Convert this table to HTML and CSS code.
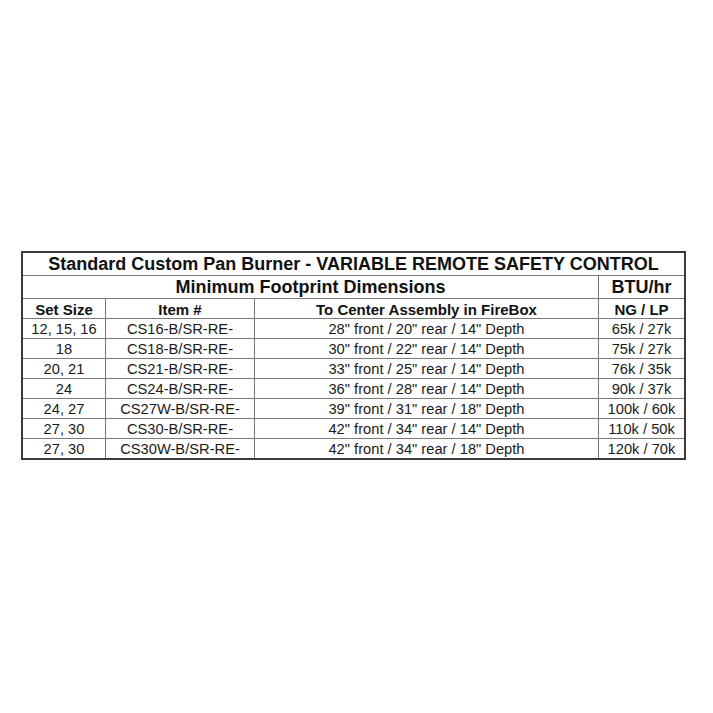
FILE: index.html
```html
<!DOCTYPE html>
<html>
<head>
<meta charset="utf-8">
<link rel="stylesheet" href="styles.css">
</head>
<body>
<div class="page">
  <div class="spec">
    <div class="cell title span4">Standard Custom Pan Burner - VARIABLE REMOTE SAFETY CONTROL</div>
    <div class="cell title span3">Minimum Footprint Dimensions</div>
    <div class="cell title last">BTU/hr</div>
    <div class="cell head">Set Size</div>
    <div class="cell head">Item #</div>
    <div class="cell head">To Center Assembly in FireBox</div>
    <div class="cell head last">NG / LP</div>

    <div class="cell">12, 15, 16</div>
    <div class="cell">CS16-B/SR-RE-</div>
    <div class="cell">28" front / 20" rear / 14" Depth</div>
    <div class="cell last">65k / 27k</div>

    <div class="cell">18</div>
    <div class="cell">CS18-B/SR-RE-</div>
    <div class="cell">30" front / 22" rear / 14" Depth</div>
    <div class="cell last">75k / 27k</div>

    <div class="cell">20, 21</div>
    <div class="cell">CS21-B/SR-RE-</div>
    <div class="cell">33" front / 25" rear / 14" Depth</div>
    <div class="cell last">76k / 35k</div>

    <div class="cell">24</div>
    <div class="cell">CS24-B/SR-RE-</div>
    <div class="cell">36" front / 28" rear / 14" Depth</div>
    <div class="cell last">90k / 37k</div>

    <div class="cell">24, 27</div>
    <div class="cell">CS27W-B/SR-RE-</div>
    <div class="cell">39" front / 31" rear / 18" Depth</div>
    <div class="cell last">100k / 60k</div>

    <div class="cell">27, 30</div>
    <div class="cell">CS30-B/SR-RE-</div>
    <div class="cell">42" front / 34" rear / 14" Depth</div>
    <div class="cell last">110k / 50k</div>

    <div class="cell bottom">27, 30</div>
    <div class="cell bottom">CS30W-B/SR-RE-</div>
    <div class="cell bottom">42" front / 34" rear / 18" Depth</div>
    <div class="cell bottom last">120k / 70k</div>
  </div>
</div>
</body>
</html>
```
FILE: styles.css
```css
html, body {
  margin: 0;
  padding: 0;
  background: #ffffff;
}
.page {
  padding: 251px 0 0 21px;
  font-family: "Liberation Sans", Arial, sans-serif;
  color: #1a1a1a;
}
.spec {
  display: grid;
  width: max-content;
  grid-template-columns: 83px 149px 344px 85px;
  grid-template-rows: 23px 23px 20px repeat(6, 20px) 19px;
  border: 2px solid #3a3a3a;
}
.cell {
  box-sizing: border-box;
  display: flex;
  align-items: center;
  justify-content: center;
  border-right: 1px solid #7a7a7a;
  border-bottom: 1px solid #7a7a7a;
  font-size: 14.7px;
  white-space: nowrap;
  padding-top: 1px;
}
.cell.last {
  border-right: none;
}
.cell.bottom {
  border-bottom: none;
}
.span4 {
  grid-column: span 4;
  border-right: none;
}
.span3 {
  grid-column: span 3;
}
.title {
  font-size: 18px;
  font-weight: bold;
  color: #111;
}
.head {
  font-size: 15px;
  font-weight: bold;
  color: #111;
}
```
